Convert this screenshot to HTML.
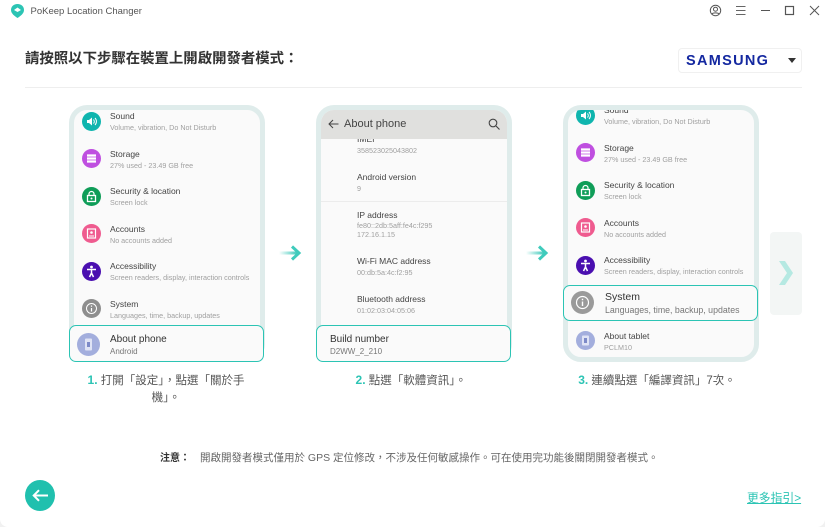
<!DOCTYPE html>
<html lang="zh-Hant"><head><meta charset="utf-8"><style>
html,body{margin:0;padding:0;width:825px;height:527px;overflow:hidden;background:#f1f1f1}
body{font-family:"Liberation Sans","Noto Sans CJK TC",sans-serif;position:relative}
#w{position:absolute;left:0;top:0;width:825px;height:527px;background:#fff;border-radius:0 0 8px 8px;overflow:hidden}
.a{position:absolute;white-space:nowrap}
.ph{position:absolute;top:105px;width:186px;height:247px;border:5px solid #dfeceb;border-radius:18px;background:#fafafa;overflow:hidden}
.t{position:absolute;font-size:8.500px;line-height:11px;color:#444;white-space:nowrap}
.s{position:absolute;font-size:7.200px;line-height:9px;color:#a0a0a0;white-space:nowrap}
.ic{position:absolute;width:19px;height:19px;border-radius:50%}
.ic svg{display:block;width:19px;height:19px}
.hl{position:absolute;top:325px;width:193px;height:34.500px;border:1.500px solid #2cc4b4;border-radius:7px;background:#fafafa}
.cap{position:absolute;font-size:11.500px;line-height:17px;color:#555;text-align:center;width:170px}
.cap b{color:#2cc4b4;font-family:"Liberation Sans",sans-serif;font-size:12px}
</style></head><body><div id="w">

<svg class="a" style="left:10px;top:3px" width="15" height="16" viewBox="0 0 15 16"><path d="M7.500 1C3.600 1 1 3.600 1 7c0 3.500 3.500 6 6.500 8 3-2 6.500-4.500 6.500-8 0-3.400-2.600-6-6.500-6z" fill="#2cc4b4"/><path d="M4 7l3.500-2.500L11 7 7.500 9z" fill="#fff"/></svg>
<div class="a" style="left:30.500px;top:5px;font-size:9.500px;line-height:13px;color:#555">PoKeep Location Changer</div>

<svg class="a" style="left:709px;top:4px" width="13" height="13" viewBox="0 0 13 13" fill="none" stroke="#555" stroke-width="1"><circle cx="6.500" cy="6.500" r="5.200"/><circle cx="6.500" cy="5.200" r="2"/><path d="M2.800 10.200c1-1.700 6.400-1.700 7.400 0"/></svg>
<svg class="a" style="left:735px;top:5px" width="11" height="11" viewBox="0 0 11 11" stroke="#666" stroke-width="1"><path d="M1 1.500h9.500M1 5.500h9.500M1 9.500h9.500"/></svg>
<svg class="a" style="left:760px;top:5px" width="11" height="11" viewBox="0 0 11 11" stroke="#555" stroke-width="1"><path d="M1 5.500h9"/></svg>
<svg class="a" style="left:784px;top:5px" width="11" height="11" viewBox="0 0 11 11" fill="none" stroke="#555" stroke-width="1.200"><rect x="1.500" y="1.500" width="8" height="8"/></svg>
<svg class="a" style="left:809px;top:5px" width="11" height="11" viewBox="0 0 11 11" stroke="#555" stroke-width="1"><path d="M1 1l9 9M10 1l-9 9"/></svg>

<div class="a" style="left:25px;top:49px;font-size:14.400px;line-height:20px;font-weight:700;color:#333">請按照以下步驟在裝置上開啟開發者模式：</div>
<div class="a" style="left:678px;top:48px;width:122px;height:23px;border:1px solid #f0f0f0;border-radius:4px;background:#fff"></div>
<div class="a" style="left:686px;top:52px;font-size:14.500px;line-height:18px;font-weight:700;letter-spacing:1.300px;color:#1428a0">SAMSUNG</div>
<div class="a" style="left:788px;top:58px;width:0;height:0;border-left:4.500px solid transparent;border-right:4.500px solid transparent;border-top:5px solid #333"></div>
<div class="a" style="left:25px;top:87px;width:777px;height:1px;background:#eee"></div>

<!-- phone 1 -->
<div class="ph" style="left:69px">
<div class="ic" style="left:7.500px;top:1.500px;background:#0fb5ae"><svg viewBox="0 0 19 19"><path d="M5 8h2l3-2.500v8L7 11H5z" fill="#fff"/><path d="M11.500 7.500a3 3 0 0 1 0 4M13 6a5 5 0 0 1 0 7" stroke="#fff" fill="none"/></svg></div>
<div class="t" style="left:36px;top:1px">Sound</div><div class="s" style="left:36px;top:12.500px">Volume, vibration, Do Not Disturb</div>
<div class="ic" style="left:7.500px;top:39px;background:#bf4fe0"><svg viewBox="0 0 19 19"><path d="M5 6.500h9M5 9.500h9M5 12.500h9" stroke="#fff" stroke-width="2.200"/></svg></div>
<div class="t" style="left:36px;top:39px">Storage</div><div class="s" style="left:36px;top:50.500px">27% used - 23.49 GB free</div>
<div class="ic" style="left:7.500px;top:76.500px;background:#0f9d58"><svg viewBox="0 0 19 19"><rect x="5.500" y="8.500" width="8" height="6" fill="none" stroke="#fff" stroke-width="1.300"/><path d="M7 8.500V7a2.500 2.500 0 0 1 5 0v1.500" fill="none" stroke="#fff" stroke-width="1.200"/><circle cx="9.500" cy="11.500" r="1" fill="#fff"/></svg></div>
<div class="t" style="left:36px;top:76px">Security &amp; location</div><div class="s" style="left:36px;top:87.500px">Screen lock</div>
<div class="ic" style="left:7.500px;top:114px;background:#ef5b8f"><svg viewBox="0 0 19 19"><rect x="5.500" y="5" width="8" height="9" fill="none" stroke="#fff" stroke-width="1.200"/><circle cx="9.500" cy="8.500" r="1.300" fill="#fff"/><path d="M7 12h5" stroke="#fff"/></svg></div>
<div class="t" style="left:36px;top:114px">Accounts</div><div class="s" style="left:36px;top:125.500px">No accounts added</div>
<div class="ic" style="left:7.500px;top:151.500px;background:#4a0fb0"><svg viewBox="0 0 19 19"><circle cx="9.500" cy="5" r="1.400" fill="#fff"/><path d="M5 7.500h9M9.500 7.500V11M9.500 11l-2 4M9.500 11l2 4" stroke="#fff" stroke-width="1.500" fill="none"/></svg></div>
<div class="t" style="left:36px;top:151px">Accessibility</div><div class="s" style="left:36px;top:162.500px">Screen readers, display, interaction controls</div>
<div class="ic" style="left:7.500px;top:189px;background:#8e8e8e"><svg viewBox="0 0 19 19"><circle cx="9.500" cy="9.500" r="5" fill="none" stroke="#fff" stroke-width="1"/><path d="M9.500 9v3.500M9.500 6.500v1.300" stroke="#fff" stroke-width="1.200"/></svg></div>
<div class="t" style="left:36px;top:189px">System</div><div class="s" style="left:36px;top:200.500px">Languages, time, backup, updates</div>
</div>
<div class="hl" style="left:69px"></div>
<div class="ic" style="left:76.500px;top:332.500px;width:23px;height:23px;background:#a3aedd"><svg style="width:23px;height:23px" viewBox="0 0 23 23"><rect x="8" y="5.500" width="7" height="12" rx="1" fill="#dfe3f5"/><rect x="10" y="9" width="3" height="5" fill="#7d8ac8"/></svg></div>
<div class="a" style="left:110px;top:333.500px;font-size:10px;line-height:12px;color:#333">About phone</div>
<div class="a" style="left:110px;top:346.500px;font-size:8px;line-height:10px;color:#777">Android</div>
<div class="cap" style="left:81px;top:372px"><b>1.</b> 打開「設定」，點選「關於手機」。</div>

<!-- arrows -->
<svg class="a" style="left:278px;top:244px" width="26" height="18" viewBox="0 0 26 18"><defs><linearGradient id="g" x1="0" x2="1" y1="0" y2="0"><stop offset="0" stop-color="#2cc4b4" stop-opacity="0"/><stop offset="1" stop-color="#2cc4b4"/></linearGradient></defs><rect x="1" y="7.500" width="20" height="3" fill="url(#g)"/><path d="M14 2.500l7 6.500-7 6.500" fill="none" stroke="#3fcbbc" stroke-width="3"/></svg>
<svg class="a" style="left:525px;top:244px" width="26" height="18" viewBox="0 0 26 18"><rect x="1" y="7.500" width="20" height="3" fill="url(#g)"/><path d="M14 2.500l7 6.500-7 6.500" fill="none" stroke="#3fcbbc" stroke-width="3"/></svg>

<!-- phone 2 -->
<div class="ph" style="left:316px">
<div class="t" style="left:36px;top:24px">IMEI</div>
<div class="a" style="left:0;top:0;width:186px;height:29px;background:#e0e0de"></div>
<svg class="a" style="left:7px;top:9px" width="11" height="10" viewBox="0 0 11 10" fill="none" stroke="#444" stroke-width="1"><path d="M10.500 5H1M5 1L1 5l4 4"/></svg>
<div class="a" style="left:23px;top:7px;font-size:11px;line-height:14px;color:#444">About phone</div>
<svg class="a" style="left:167px;top:8px" width="12" height="12" viewBox="0 0 12 12" fill="none" stroke="#444" stroke-width="1.100"><circle cx="5" cy="5" r="3.800"/><path d="M8 8l3.500 3.500"/></svg>
<div class="s" style="left:36px;top:35.500px">358523025043802</div>
<div class="t" style="left:36px;top:62px">Android version</div><div class="s" style="left:36px;top:73.500px">9</div>
<div class="a" style="left:0;top:91px;width:186px;height:1px;background:#ececec"></div>
<div class="t" style="left:36px;top:100px">IP address</div><div class="s" style="left:36px;top:111px">fe80::2db:5aff:fe4c:f295</div><div class="s" style="left:36px;top:119.500px">172.16.1.15</div>
<div class="t" style="left:36px;top:146px">Wi-Fi MAC address</div><div class="s" style="left:36px;top:158px">00:db:5a:4c:f2:95</div>
<div class="t" style="left:36px;top:184px">Bluetooth address</div><div class="s" style="left:36px;top:196px">01:02:03:04:05:06</div>
</div>
<div class="hl" style="left:316px"></div>
<div class="a" style="left:330px;top:333.500px;font-size:10px;line-height:12px;color:#333">Build number</div>
<div class="a" style="left:330px;top:346.500px;font-size:8px;line-height:10px;color:#777">D2WW_2_210</div>
<div class="cap" style="left:326px;top:372px"><b>2.</b> 點選「軟體資訊」。</div>

<!-- phone 3 -->
<div class="ph" style="left:563px">
<div class="ic" style="left:7.500px;top:-4.500px;background:#0fb5ae"><svg viewBox="0 0 19 19"><path d="M5 8h2l3-2.500v8L7 11H5z" fill="#fff"/><path d="M11.500 7.500a3 3 0 0 1 0 4M13 6a5 5 0 0 1 0 7" stroke="#fff" fill="none"/></svg></div>
<div class="t" style="left:36px;top:-5px">Sound</div><div class="s" style="left:36px;top:6.500px">Volume, vibration, Do Not Disturb</div>
<div class="ic" style="left:7.500px;top:33px;background:#bf4fe0"><svg viewBox="0 0 19 19"><path d="M5 6.500h9M5 9.500h9M5 12.500h9" stroke="#fff" stroke-width="2.200"/></svg></div>
<div class="t" style="left:36px;top:33px">Storage</div><div class="s" style="left:36px;top:44.500px">27% used - 23.49 GB free</div>
<div class="ic" style="left:7.500px;top:70.500px;background:#0f9d58"><svg viewBox="0 0 19 19"><rect x="5.500" y="8.500" width="8" height="6" fill="none" stroke="#fff" stroke-width="1.300"/><path d="M7 8.500V7a2.500 2.500 0 0 1 5 0v1.500" fill="none" stroke="#fff" stroke-width="1.200"/><circle cx="9.500" cy="11.500" r="1" fill="#fff"/></svg></div>
<div class="t" style="left:36px;top:70px">Security &amp; location</div><div class="s" style="left:36px;top:81.500px">Screen lock</div>
<div class="ic" style="left:7.500px;top:108px;background:#ef5b8f"><svg viewBox="0 0 19 19"><rect x="5.500" y="5" width="8" height="9" fill="none" stroke="#fff" stroke-width="1.200"/><circle cx="9.500" cy="8.500" r="1.300" fill="#fff"/><path d="M7 12h5" stroke="#fff"/></svg></div>
<div class="t" style="left:36px;top:108px">Accounts</div><div class="s" style="left:36px;top:119.500px">No accounts added</div>
<div class="ic" style="left:7.500px;top:145.500px;background:#4a0fb0"><svg viewBox="0 0 19 19"><circle cx="9.500" cy="5" r="1.400" fill="#fff"/><path d="M5 7.500h9M9.500 7.500V11M9.500 11l-2 4M9.500 11l2 4" stroke="#fff" stroke-width="1.500" fill="none"/></svg></div>
<div class="t" style="left:36px;top:145px">Accessibility</div><div class="s" style="left:36px;top:156.500px">Screen readers, display, interaction controls</div>
<div class="ic" style="left:7.500px;top:221px;background:#a3aedd"><svg viewBox="0 0 19 19"><rect x="6" y="4.500" width="7" height="10" rx="1" fill="#dfe3f5"/><rect x="8" y="7" width="3" height="5" fill="#7d8ac8"/></svg></div>
<div class="t" style="left:36px;top:221px">About tablet</div><div class="s" style="left:36px;top:232.500px">PCLM10</div>
</div>
<div class="hl" style="left:563px;top:284.500px"></div>
<div class="ic" style="left:570.500px;top:291px;width:23px;height:23px;background:#9a9a9a"><svg style="width:23px;height:23px" viewBox="0 0 23 23"><circle cx="11.500" cy="11.500" r="6" fill="none" stroke="#fff" stroke-width="1.200"/><path d="M11.500 10.500v4.500M11.500 7.800v1.500" stroke="#fff" stroke-width="1.400"/></svg></div>
<div class="a" style="left:605px;top:291px;font-size:10.500px;line-height:13px;color:#333">System</div>
<div class="a" style="left:605px;top:305px;font-size:8.800px;line-height:11px;color:#777">Languages, time, backup, updates</div>
<div class="cap" style="left:572px;top:372px"><b>3.</b> 連續點選「編譯資訊」7次。</div>

<!-- next -->
<div class="a" style="left:770px;top:232px;width:32px;height:83px;background:#f3f6f5;border-radius:4px"></div>
<svg class="a" style="left:778px;top:261px" width="16" height="26" viewBox="0 0 16 26"><path d="M1 0h6l8 12-8 12H1l8-12z" fill="#b5e9e2"/></svg>

<!-- note -->
<div class="a" style="left:160px;top:451px;font-size:10px;line-height:15px;font-weight:700;color:#333">注意：</div>
<div class="a" style="left:200px;top:451px;font-size:10.500px;line-height:15px;color:#666">開啟開發者模式僅用於 GPS 定位修改，不涉及任何敏感操作。可在使用完功能後關閉開發者模式。</div>

<!-- back -->
<div class="a" style="left:25px;top:480px;width:30px;height:31px;border-radius:50%;background:#20c0ae"></div>
<svg class="a" style="left:31px;top:488px" width="18" height="15" viewBox="0 0 18 15" fill="none" stroke="#fff" stroke-width="2"><path d="M17 7.500H3M8 2.200L2.700 7.500 8 12.800"/></svg>

<div class="a" style="left:747px;top:491px;font-size:11.800px;line-height:15px;color:#2cc4b4;text-decoration:underline">更多指引&gt;</div>
</div></body></html>
